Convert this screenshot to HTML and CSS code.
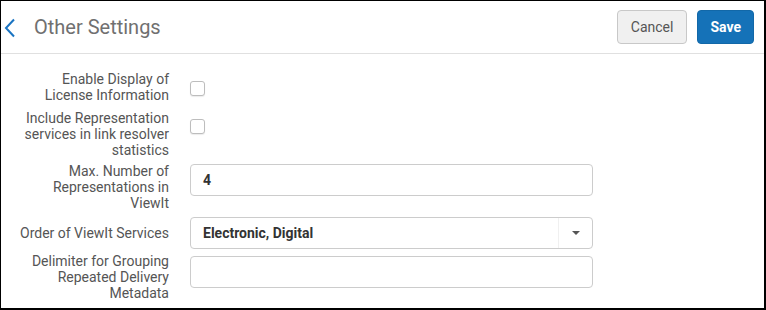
FILE: index.html
```html
<!DOCTYPE html>
<html>
<head>
<meta charset="utf-8">
<link rel="stylesheet" href="styles.css">
</head>
<body>
<div class="frame">
  <header class="header">
    <div class="title-group">
      <svg class="back" width="12" height="20" viewBox="0 0 12 20"><polyline points="10,1.5 2,10 10,18.5" fill="none" stroke="#1a74c2" stroke-width="2"/></svg>
      <h1 class="title">Other Settings</h1>
    </div>
    <div class="actions">
      <button class="btn btn-cancel">Cancel</button>
      <button class="btn btn-save">Save</button>
    </div>
  </header>
  <div class="form">
    <div class="row r1">
      <label class="label">Enable Display of License Information</label>
      <div class="checkbox cb1"></div>
    </div>
    <div class="row r2">
      <label class="label">Include Representation services in link resolver statistics</label>
      <div class="checkbox cb2"></div>
    </div>
    <div class="row r3">
      <label class="label">Max. Number of Representations in ViewIt</label>
      <div class="input in3">4</div>
    </div>
    <div class="row r4">
      <label class="label">Order of ViewIt Services</label>
      <div class="input select"><span class="sel-text">Electronic, Digital</span><span class="sel-btn"><span class="caret"></span></span></div>
    </div>
    <div class="row r5">
      <label class="label">Delimiter for Grouping Repeated Delivery Metadata</label>
      <div class="input in5"></div>
    </div>
  </div>
</div>
</body>
</html>
```

FILE: styles.css
```css
* { box-sizing: border-box; }
html, body { margin: 0; padding: 0; background: #fff; }
body { font-family: Roboto, "Liberation Sans", sans-serif; }
.frame {
  width: 766px;
  height: 310px;
  border-style: solid;
  border-color: #000;
  border-width: 1px 2px 2px 1px;
  overflow: hidden;
  background: #fff;
}
.header {
  height: 52px;
  border-bottom: 1px solid #e0e0e0;
  display: flex;
  align-items: center;
  justify-content: space-between;
  padding: 0 10px 0 3px;
  box-sizing: content-box;
}
.title-group { display: flex; align-items: center; }
.back { display: block; margin-top: 1px; }
.title {
  margin: 0 0 0 18px;
  font-size: 20px;
  font-weight: 400;
  color: #707070;
}
.actions { display: flex; gap: 10px; margin-top: 0px; }
.btn {
  height: 34px;
  font-family: Roboto, "Liberation Sans", sans-serif;
  font-size: 14px;
  border-radius: 4px;
  padding: 0 13px;
  cursor: pointer;
}
.btn-cancel {
  background: #f0f0f0;
  border: 1px solid #c8c8c8;
  color: #555;
}
.btn-save {
  background: #1572b8;
  border: 1px solid #1268a8;
  color: #fff;
  font-weight: 700;
  padding: 0 12px;
}
.form {
  padding: 17px 0 0 18px;
  display: flex;
  flex-direction: column;
}
.row {
  display: grid;
  grid-template-columns: 150px 403px;
  column-gap: 21px;
  align-items: start;
}
.label {
  text-align: right;
  font-size: 14px;
  line-height: 16px;
  color: #555;
}
.r2 { margin-top: 7px; }
.r3 { margin-top: 5px; }
.r4 { margin-top: 6px; align-items: center; }
.r5 { margin-top: 4px; }
.checkbox {
  width: 15px;
  height: 15px;
  border: 1px solid #bdbdbd;
  border-radius: 3px;
  background: #fff;
  box-shadow: 0 1px 1px rgba(0,0,0,0.08);
}
.cb1 { margin-top: 10px; }
.cb2 { margin-top: 9px; }
.input {
  height: 32px;
  border: 1px solid #cccccc;
  border-radius: 4px;
  background: #fff;
  padding: 0 12px;
  font-size: 14px;
  font-weight: 700;
  color: #333;
  display: flex;
  align-items: center;
}
.in3 { margin-top: 1px; }
.in5 { margin-top: 3px; }
.select { padding: 0 0 0 12px; }
.sel-text { flex: 1; }
.sel-btn {
  width: 34px;
  height: 100%;
  border-left: 1px solid #f0f0f0;
  display: flex;
  align-items: center;
  justify-content: center;
}
.caret {
  width: 0;
  height: 0;
  border-left: 4px solid transparent;
  border-right: 4px solid transparent;
  border-top: 4px solid #555;
}
```
